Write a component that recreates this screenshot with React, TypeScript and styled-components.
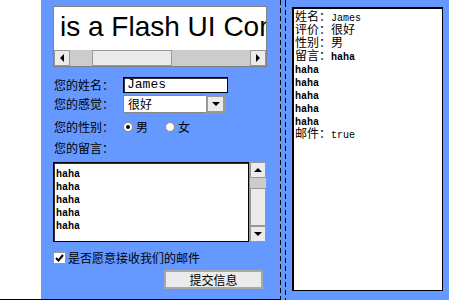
import styled, { createGlobalStyle } from "styled-components";

const GlobalStyle = createGlobalStyle`
  html, body {
    margin: 0;
    padding: 0;
    background: #fff;
  }
  body {
    width: 449px;
    height: 300px;
    overflow: hidden;
    font-family: "Noto Sans CJK SC", sans-serif;
    font-size: 12px;
    color: #000;
  }
`;

const BLUE = "#6699ff";

const Stage = styled.div`
  display: flex;
  width: 449px;
  height: 300px;
`;

const Gutter = styled.div`
  width: 41px;
  height: 300px;
  box-sizing: border-box;
  border-bottom: 1px solid #000;
  background: #fff;
`;

const FormPanel = styled.div`
  width: 239px;
  height: 300px;
  box-sizing: border-box;
  border-bottom: 1px solid #000;
  background: ${BLUE};
  padding: 6px 0 0 12px;
  display: flex;
  flex-direction: column;
`;

const Divider = styled.div`
  width: 12px;
  height: 300px;
  background: ${BLUE};
  display: flex;
  gap: 4px;
`;

const Dash = styled.div<{ $offset?: number }>`
  width: 1px;
  height: 300px;
  background: repeating-linear-gradient(
    to bottom,
    #000 0 5px,
    transparent 5px 8px
  );
  background-position: 0 ${(p) => p.$offset ?? 0}px;
`;

const OutputWrap = styled.div`
  flex: 1;
  background: ${BLUE};
  padding: 7px 0 0 0;
`;

const OutputBox = styled.div`
  width: 151px;
  height: 284px;
  box-sizing: border-box;
  background: #fff;
  border: 1px solid #000;
  border-top-width: 2px;
  border-left-width: 2px;
  padding: 0 0 0 1px;
  line-height: 13px;
`;

const Line = styled.div`
  height: 13px;
  line-height: 13px;
  white-space: nowrap;
`;

const Latin = styled.span<{ $bold?: boolean }>`
  font-family: "Liberation Mono", monospace;
  font-size: 10px;
  font-weight: ${(p) => (p.$bold ? "bold" : "normal")};
`;

/* ticker */
const Ticker = styled.div`
  width: 214px;
  height: 61px;
  box-sizing: border-box;
  border: 1px solid #808080;
  background: #fff;
  display: flex;
  flex-direction: column;
`;

const TickerText = styled.div`
  height: 43px;
  line-height: 40px;
  padding-left: 6px;
  font-family: "Liberation Sans", Arial, sans-serif;
  font-size: 28px;
  white-space: nowrap;
  overflow: hidden;
`;

const HScroll = styled.div`
  height: 16px;
  display: flex;
  background: #cccccc;
`;

const ScrollBtn = styled.div`
  width: 16px;
  height: 16px;
  box-sizing: border-box;
  background: #ebebeb;
  border: 1px solid #999;
  display: flex;
  align-items: center;
  justify-content: center;
  flex-shrink: 0;
`;

const HThumb = styled.div`
  margin-left: 22px;
  width: 80px;
  box-sizing: border-box;
  background: #ebebeb;
  border: 1px solid #999;
`;

const Spacer = styled.div`
  flex: 1;
`;

const Tri = styled.div<{ $dir: "up" | "down" | "left" | "right" }>`
  width: 0;
  height: 0;
  ${(p) =>
    p.$dir === "up"
      ? "border-left: 4px solid transparent; border-right: 4px solid transparent; border-bottom: 4px solid #000;"
      : p.$dir === "down"
      ? "border-left: 4px solid transparent; border-right: 4px solid transparent; border-top: 4px solid #000;"
      : p.$dir === "left"
      ? "border-top: 4px solid transparent; border-bottom: 4px solid transparent; border-right: 4px solid #000;"
      : "border-top: 4px solid transparent; border-bottom: 4px solid transparent; border-left: 4px solid #000;"}
`;

/* form rows */
const Row = styled.div<{ $h: number; $mt: number }>`
  display: flex;
  align-items: center;
  height: ${(p) => p.$h}px;
  margin-top: ${(p) => p.$mt}px;
`;

const Label = styled.div`
  width: 70px;
  padding-left: 1px;
  box-sizing: border-box;
  line-height: 14px;
  white-space: nowrap;
`;

const NameInput = styled.div`
  width: 105px;
  height: 16px;
  box-sizing: border-box;
  background: #fff;
  border: 1px solid #000;
  box-shadow: inset 1px 1px 0 #333;
  padding-left: 3px;
  font-family: "Liberation Mono", monospace;
  font-size: 13px;
  line-height: 14px;
`;

const Combo = styled.div`
  width: 102px;
  height: 18px;
  display: flex;
`;

const ComboText = styled.div`
  flex: 1;
  box-sizing: border-box;
  background: #fff;
  border: 1px solid #888;
  border-right: none;
  padding-left: 4px;
  line-height: 16px;
`;

const ComboBtn = styled.div`
  width: 19px;
  box-sizing: border-box;
  background: #ebebeb;
  border: 2px solid #999;
  display: flex;
  align-items: center;
  justify-content: center;
`;

const Radio = styled.div<{ $checked?: boolean; $ml?: number }>`
  width: 10px;
  height: 10px;
  box-sizing: border-box;
  border-radius: 50%;
  border: 1px solid #888;
  background: #fff;
  margin-left: ${(p) => p.$ml ?? 0}px;
  display: flex;
  align-items: center;
  justify-content: center;
  &::after {
    content: "";
    width: 4px;
    height: 4px;
    border-radius: 50%;
    background: ${(p) => (p.$checked ? "#000" : "transparent")};
  }
`;

const RadioText = styled.span`
  margin-left: 3px;
  line-height: 14px;
`;

const MessageBlock = styled.div`
  display: flex;
  margin-top: 7px;
  height: 80px;
`;

const MessageBox = styled.div`
  width: 196px;
  height: 80px;
  box-sizing: border-box;
  background: #fff;
  border: 1px solid #000;
  box-shadow: inset 1px 1px 0 #333;
  padding: 2px 0 0 2px;
`;

const VScroll = styled.div`
  width: 16px;
  height: 80px;
  margin-left: 1px;
  display: flex;
  flex-direction: column;
  background: #cccccc;
`;

const VTrack = styled.div`
  height: 10px;
`;

const VThumb = styled.div`
  height: 38px;
  box-sizing: border-box;
  background: #ebebeb;
  border: 1px solid #999;
`;

const CheckBox = styled.div`
  width: 13px;
  height: 12px;
  box-sizing: border-box;
  background: #fff;
  border: 1px solid #999;
  display: flex;
  align-items: center;
  justify-content: center;
`;

const CheckText = styled.span`
  margin-left: 2px;
  line-height: 14px;
`;

const SubmitButton = styled.div`
  margin: 6px 0 0 111px;
  width: 99px;
  height: 19px;
  box-sizing: border-box;
  background: #ebebeb;
  border: 2px solid #a8a8a8;
  display: flex;
  align-items: center;
  justify-content: center;
  line-height: 14px;
`;

const messageLines = ["haha", "haha", "haha", "haha", "haha"];

export default function App() {
  return (
    <>
      <GlobalStyle />
      <Stage>
        <Gutter />
        <FormPanel>
          <Ticker>
            <TickerText>is a Flash UI Component</TickerText>
            <HScroll>
              <ScrollBtn>
                <Tri $dir="left" />
              </ScrollBtn>
              <HThumb />
              <Spacer />
              <ScrollBtn>
                <Tri $dir="right" />
              </ScrollBtn>
            </HScroll>
          </Ticker>

          <Row $h={16} $mt={10}>
            <Label>您的姓名：</Label>
            <NameInput>James</NameInput>
          </Row>
          <Row $h={18} $mt={2}>
            <Label>您的感觉：</Label>
            <Combo>
              <ComboText>很好</ComboText>
              <ComboBtn>
                <Tri $dir="down" />
              </ComboBtn>
            </Combo>
          </Row>
          <Row $h={16} $mt={6}>
            <Label>您的性别：</Label>
            <Radio $checked />
            <RadioText>男</RadioText>
            <Radio $ml={17} />
            <RadioText>女</RadioText>
          </Row>
          <Row $h={14} $mt={6}>
            <Label>您的留言：</Label>
          </Row>

          <MessageBlock>
            <MessageBox>
              {messageLines.map((l, i) => (
                <Line key={i}>
                  <Latin $bold>{l}</Latin>
                </Line>
              ))}
            </MessageBox>
            <VScroll>
              <ScrollBtn>
                <Tri $dir="up" />
              </ScrollBtn>
              <VTrack />
              <VThumb />
              <ScrollBtn>
                <Tri $dir="down" />
              </ScrollBtn>
            </VScroll>
          </MessageBlock>

          <Row $h={12} $mt={10}>
            <CheckBox>
              <svg width="9" height="8" viewBox="0 0 9 8">
                <path d="M1 4 L3.5 6.5 L8 1" stroke="#000" strokeWidth="2" fill="none" />
              </svg>
            </CheckBox>
            <CheckText>是否愿意接收我们的邮件</CheckText>
          </Row>

          <SubmitButton>提交信息</SubmitButton>
        </FormPanel>

        <Divider>
          <Dash />
          <Dash $offset={2} />
        </Divider>

        <OutputWrap>
          <OutputBox>
            <Line>
              姓名：<Latin>James</Latin>
            </Line>
            <Line>评价：很好</Line>
            <Line>性别：男</Line>
            <Line>
              留言：<Latin $bold>haha</Latin>
            </Line>
            {messageLines.map((l, i) => (
              <Line key={i}>
                <Latin $bold>{l}</Latin>
              </Line>
            ))}
            <Line>
              邮件：<Latin>true</Latin>
            </Line>
          </OutputBox>
        </OutputWrap>
      </Stage>
    </>
  );
}
